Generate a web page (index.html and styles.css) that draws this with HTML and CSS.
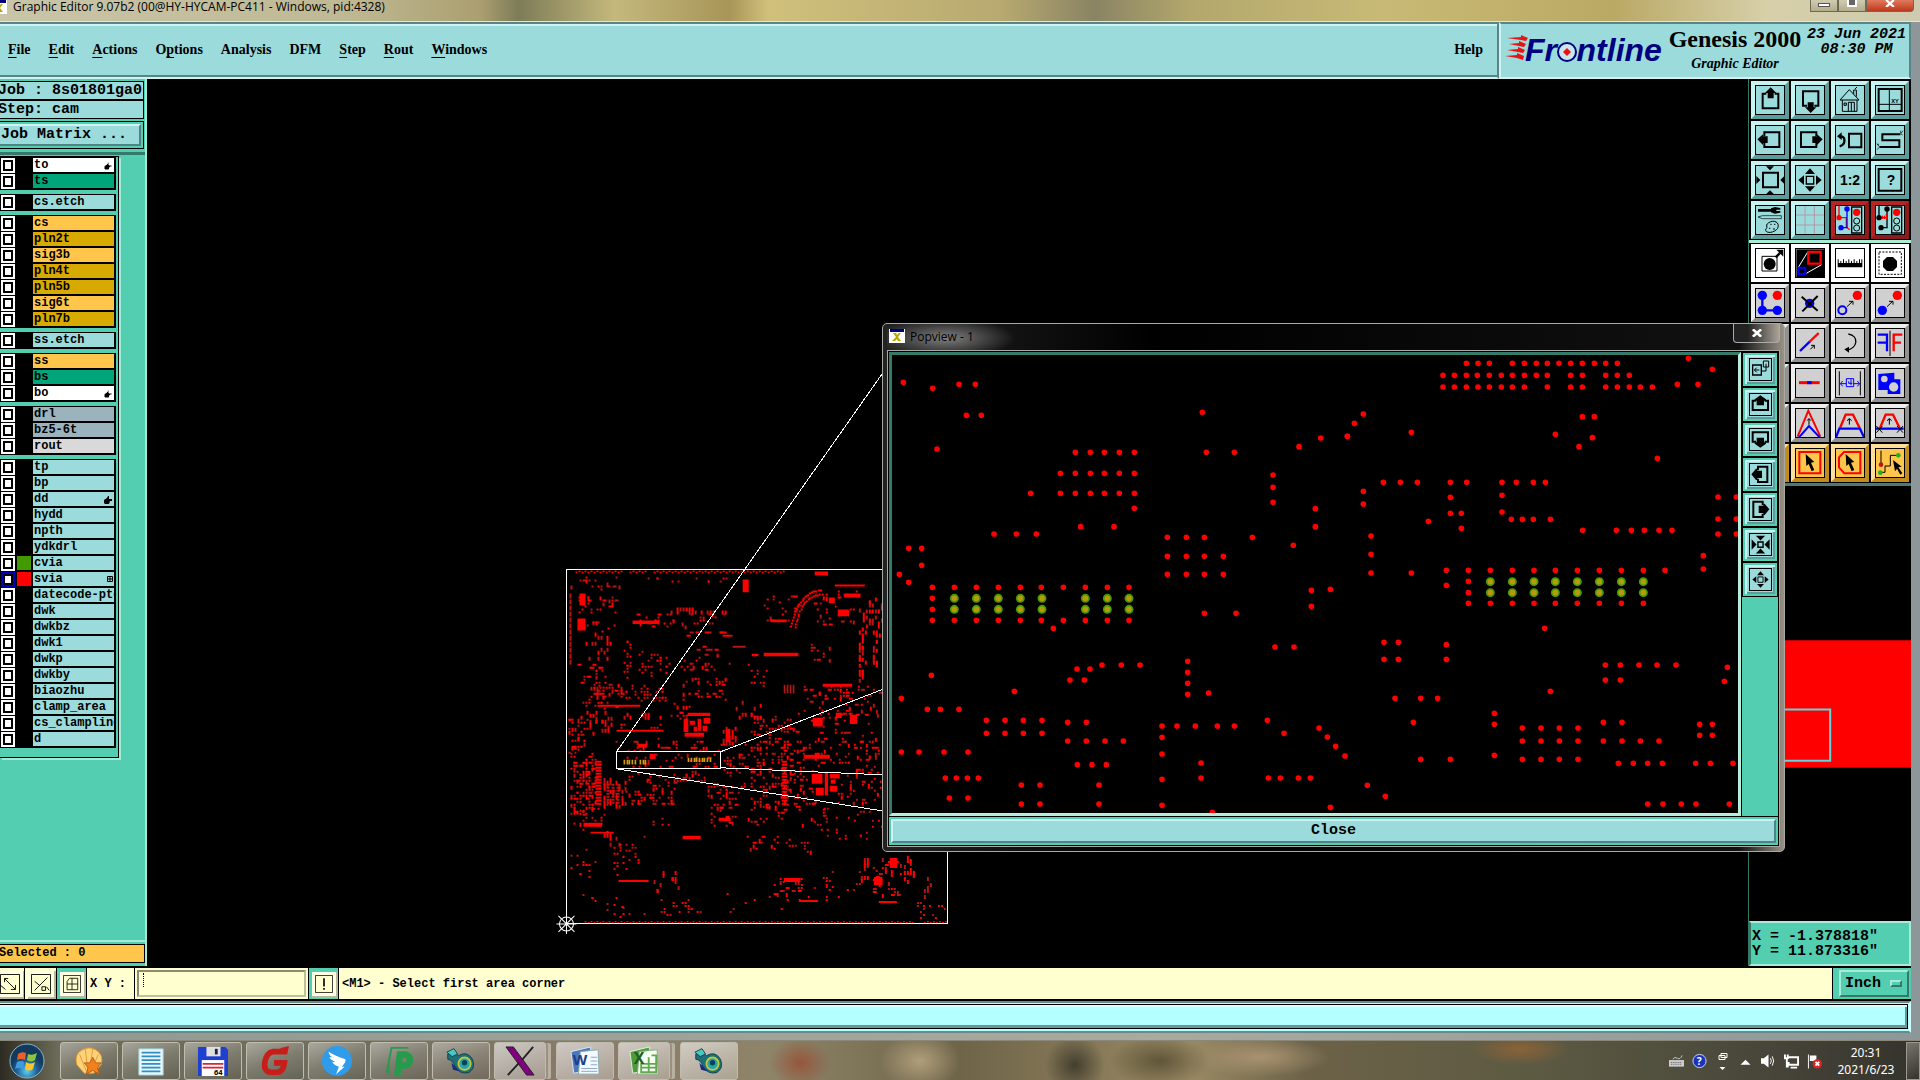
FILE: index.html
```html
<!DOCTYPE html>
<html lang="en">
<head>
    <meta charset="utf-8">
    <title>Graphic Editor 9.07b2</title>
    <link rel="stylesheet" href="styles.css">
</head>
<body>
    <svg class="defs" aria-hidden="true">
        <symbol id="i-up" viewBox="0 0 90 90"><path class="k5" d="M34 26H23V70H70V26H59"/><path d="M47 7L64 24H56V40H38V24H30Z"/></symbol>
        <symbol id="i-down" viewBox="0 0 90 90"><path class="k5" d="M36 62H24V19H70V62H58"/><path d="M47 84L30 67H38V52H56V67H64Z"/></symbol>
        <symbol id="i-left" viewBox="0 0 90 90"><path class="k5" d="M28 34V22H73V66H28V54"/><path d="M7 43L24 28V34H38V54H24V60Z"/></symbol>
        <symbol id="i-right" viewBox="0 0 90 90"><path class="k5" d="M64 34V22H18V66H64V54"/><path d="M83 43L66 28V34H52V54H66V60Z"/></symbol>
        <symbol id="i-pup" viewBox="0 0 63 63"><path class="k5" d="M18 20H8V48H54V20H44"/><path d="M31 4L48 16V20H42V34H20V20H14V16Z"/></symbol>
        <symbol id="i-pdown" viewBox="0 0 63 63"><path class="k5" d="M18 38H8V10H54V38H44"/><path d="M31 56L14 44V40H20V26H42V40H48V44Z"/></symbol>
        <symbol id="i-pleft" viewBox="0 0 63 63"><path class="k5" d="M24 18V8H52V54H24V44"/><path d="M4 31L18 14H22V20H36V42H22V48H18Z"/></symbol>
        <symbol id="i-pright" viewBox="0 0 63 63"><path class="k5" d="M38 18V8H10V54H38V44"/><path d="M58 31L44 14H40V20H26V42H40V48H44Z"/></symbol>
        <symbol id="i-home" viewBox="0 0 90 90"><path class="k3" d="M15 45L43 14L72 45H15M22 45V79H66V45M40 79V52H58V79M49 52V79M27 54H34V61H27ZM56 27V15H64V35M60 12L66 6"/></symbol>
        <symbol id="i-undo" viewBox="0 0 90 90"><path class="k5" d="M42 26H79V67H42Z"/><path class="k6" d="M14 35C32 30 34 58 14 64"/><path d="M6 34L20 22V45Z"/></symbol>
        <symbol id="i-snake" viewBox="0 0 90 90"><path class="k5" d="M76 28H22V46H73V66H14"/><path class="k2" d="M76 28L84 17M77 24V17M83 30L78 27M14 66L6 56M14 66L6 74M12 58H6"/></symbol>
        <symbol id="i-zoomin" viewBox="0 0 90 90"><path class="k5" d="M24 23H69V67H24Z"/><path d="M45 16L33 4H57ZM45 76L33 88H57ZM16 45L4 33V57ZM76 45L88 33V57Z"/></symbol>
        <symbol id="i-zoomout" viewBox="0 0 90 90"><path class="k4" d="M34 34H56V57H34Z"/><path d="M45 10L60 27H30ZM45 80L60 64H30ZM10 45L27 31V60ZM80 45L63 31V60Z"/></symbol>
        <symbol id="i-center" viewBox="0 0 90 90"><path class="k5" d="M34 34H56V57H34Z"/><path d="M45 28L25 7H65ZM45 62L25 84H65ZM28 45L7 22V68ZM62 45L84 22V68Z"/></symbol>
        <symbol id="i-tools" viewBox="0 0 90 90"><path d="M9 12H48V20H9ZM48 10L60 6L76 9V14H64V18H76V23L60 26L48 22Z"/><path class="k2" d="M9 36L22 32H79V41H22Z"/><path class="k3" d="M40 54C56 42 76 52 68 70C58 84 34 86 32 76C30 70 38 70 36 66S34 58 40 54ZM46 58h4M57 58h4M42 70h4M54 72h6"/></symbol>
        <symbol id="i-grid" viewBox="0 0 90 90"><path class="k3 pink" d="M0 30H90M0 60H90M30 0V90M58 0V90"/></symbol>
        <symbol id="i-net" viewBox="0 0 90 90"><path class="k4 red" d="M12 0V38H34V66L44 74"/><path class="k4 blue" d="M36 12V68H18"/><circle cx="12" cy="38" r="8" class="fr"/><circle cx="36" cy="12" r="8" class="fb"/><circle cx="18" cy="68" r="8" class="fb"/><use href="#light"/></symbol>
        <symbol id="i-net2" viewBox="0 0 90 90"><path class="k4" d="M12 0V38M36 12V68H18"/><path class="k4 red" d="M12 38H34M22 32V42M28 32V42M34 28V42"/><circle cx="12" cy="38" r="8"/><circle cx="36" cy="12" r="8"/><circle cx="18" cy="68" r="8"/><use href="#light"/></symbol>
        <g id="light"><path class="k4" d="M50 6H80V84H50Z"/><circle cx="65" cy="22" r="11" class="fr"/><circle cx="65" cy="48" r="9" class="k3"/><circle cx="65" cy="69" r="9" class="k3"/></g>
        <symbol id="i-feature" viewBox="0 0 90 90"><path class="k3" d="M21 25H66V69H21Z"/><circle cx="44" cy="48" r="18"/><path class="k6" d="M62 28L76 14"/><path d="M85 5V26L64 5Z"/></symbol>
        <symbol id="i-popview" viewBox="0 0 90 90"><path d="M4 4H88V88H4Z"/><path class="k3 white" d="M10 58L38 12M34 76L80 50"/><path class="k6 red" d="M40 12H77V47H40Z"/><path class="k5 blue" d="M9 59H31V78H9Z"/></symbol>
        <symbol id="i-ruler" viewBox="0 0 90 90"><path d="M8 34h3v11h5V39h3v6h5V34h3v11h5V39h3v6h5V34h3v11h5V39h3v6h5V34h3v11h5V39h3v6h5V34h3v11h4V34h3V58H8Z"/></symbol>
        <symbol id="i-select" viewBox="0 0 90 90"><path class="k3" stroke-dasharray="6 4" d="M12 12H79V79H12Z"/><path d="M36 27H54L66 39V57L54 69H36L24 57V39Z"/></symbol>
        <symbol id="i-chain" viewBox="0 0 90 90"><path class="k6 blue" d="M22 22V67H67"/><circle cx="22" cy="22" r="14" class="fb"/><circle cx="22" cy="67" r="14" class="fb"/><circle cx="67" cy="67" r="14" class="fb"/><circle cx="67" cy="22" r="14" class="fr"/></symbol>
        <symbol id="i-delete" viewBox="0 0 90 90"><circle cx="44" cy="46" r="14" class="fb"/><path class="k5" d="M20 26L68 68M68 24L22 70"/></symbol>
        <symbol id="i-copy" viewBox="0 0 90 90"><circle cx="67" cy="22" r="14" class="fr"/><circle cx="22" cy="67" r="12" class="k5 blue"/><path class="k3" d="M36 56L53 40M42 40H54V50"/></symbol>
        <symbol id="i-move" viewBox="0 0 90 90"><circle cx="67" cy="22" r="14" class="fr"/><circle cx="22" cy="67" r="14" class="fb"/><path class="k3" d="M36 56L53 40M42 40H54V50"/></symbol>
        <symbol id="i-line" viewBox="0 0 90 90"><path class="k6 blue" d="M15 69L45 40"/><path class="k6 red" d="M43 42L71 15"/><path class="k3" d="M46 64L58 52M48 52H58V62"/></symbol>
        <symbol id="i-rotate" viewBox="0 0 90 90"><path class="k4" d="M40 18C74 24 68 62 34 66"/><path d="M28 64L42 56V74Z"/></symbol>
        <symbol id="i-mirror" viewBox="0 0 90 90"><path class="k6 blue" d="M8 20H36V70M8 44H36"/><path class="k6 red" d="M82 20H56V70M56 44H78"/><path class="k3" d="M45 8V84"/></symbol>
        <symbol id="i-seg" viewBox="0 0 90 90"><path class="k8 red" d="M12 44H74"/><path class="k8 blue" d="M36 44H50"/></symbol>
        <symbol id="i-space" viewBox="0 0 90 90"><path class="k3" d="M13 10V82M76 10V82"/><path class="k3 blue" d="M34 32H56V56H34ZM16 47H34M56 47H74M23 39L16 47L23 55M67 39L74 47L67 55M48 34V52M41 40V46H52"/></symbol>
        <symbol id="i-shape" viewBox="0 0 90 90"><path class="fb" d="M10 18L58 14V34H76V78H38V66H10Z"/><circle cx="28" cy="33" r="10" fill="#d0d0d0"/><circle cx="56" cy="57" r="14" fill="#d0d0d0"/></symbol>
        <symbol id="i-peak" viewBox="0 0 90 90"><path class="k5 red" d="M8 86L40 8L76 86"/><path class="k5 blue" d="M12 88L42 54L74 88"/><path class="k3" d="M42 50V32M36 38L42 32L48 38"/></symbol>
        <symbol id="i-trap" viewBox="0 0 90 90"><path class="k6 red" d="M15 60L32 20H54L74 60"/><path class="k6 blue" d="M3 88L13 62H75L87 88"/><path class="k3" d="M43 50V32M36 38L43 32L50 38"/></symbol>
        <symbol id="i-trapx" viewBox="0 0 90 90"><path class="k6 red" d="M15 60L32 20H54L74 60"/><path class="k6 blue" d="M2 62H86"/><path class="k3" d="M43 50V32M36 38L43 32L50 38M4 54L22 74M22 54L4 74M66 54L84 74M84 54L66 74"/></symbol>
        <symbol id="i-rsel" viewBox="0 0 90 90"><path class="k5 red" d="M13 12H76V76H13Z"/><path d="M32 18L58 42L48 44L58 66L50 70L41 48L34 54Z"/></symbol>
        <symbol id="i-psel" viewBox="0 0 90 90"><path class="k5 red" d="M27 12H76V76H28L12 58V28Z"/><path d="M32 18L58 42L48 44L58 66L50 70L41 48L34 54Z"/></symbol>
        <symbol id="i-nsel" viewBox="0 0 90 90"><path class="k3" d="M18 8V46M70 22H46V54H30V73H18"/><circle cx="18" cy="50" r="7" fill="#c21807"/><circle cx="70" cy="22" r="7" fill="#20b020"/><circle cx="16" cy="74" r="7" fill="#20b020"/><path d="M54 36L80 56L70 58L82 76L76 80L66 62L60 70Z"/></symbol>
        <symbol id="i-newpop" viewBox="0 0 63 63"><path class="k4" d="M8 18H34V48H8Z"/><path class="k3" d="M40 6H56V24H40ZM34 36H48V14M28 33H14M20 26L13 33L20 40"/></symbol>
        <symbol id="i-hand" viewBox="0 0 8 8"><path d="M0 4L3 2L4 0H5V3H8V5H6L5 8H1L0 7Z"/></symbol>
        <symbol id="i-xwin" viewBox="0 0 16 14"><path fill="#fff" d="M0 0H16V14H0Z"/><path fill="#000080" d="M1 0H15V3H1Z"/><path fill="#b8a800" d="M4 4H7L8 6L10 4H12L9 8L12 12H9L8 10L6 12H3L7 8Z"/></symbol>
        <g id="fish"><path fill="#1f6f78" stroke="#0b3f50" d="M2 6Q10 2 14 8Q24 2 30 12Q34 22 26 27Q16 30 10 20Q8 13 2 12Z"/><circle cx="21" cy="17" r="7" fill="#2aa6a2" stroke="#c8c83c" stroke-width="2"/><circle cx="21" cy="16" r="3" fill="#0b3f66"/><path fill="#49c9bf" stroke="#0b3f50" d="M1 4L9 0L13 6L7 9Z"/><path fill="#1a2a80" d="M6 16L10 20L16 26L8 24Z"/></g>
    </svg>

    <div class="window">
        <header class="titlebar">
            <svg class="winicon"><use href="#i-xwin"/></svg>
            <span class="title">Graphic Editor 9.07b2 (00@HY-HYCAM-PC411 - Windows, pid:4328)</span>
            <div class="winbtns">
                <button aria-label="Minimize"><i class="min"></i></button>
                <button aria-label="Maximize"><i class="max"></i></button>
                <button class="x" aria-label="Close window"><svg viewBox="0 0 12 9"><path d="M1 0L11 9M11 0L1 9"/></svg></button>
            </div>
        </header>

        <div class="top">
            <nav class="menubar">
                <button><u>F</u>ile</button>
                <button><u>E</u>dit</button>
                <button><u>A</u>ctions</button>
                <button>O<u>p</u>tions</button>
                <button>Analysis</button>
                <button>DFM</button>
                <button><u>S</u>tep</button>
                <button><u>R</u>out</button>
                <button><u>W</u>indows</button>
                <button class="help">Help</button>
            </nav>
            <div class="brand">
                <svg class="logo" viewBox="0 0 160 30">
                    <path fill="#e11" d="M2 3L16 2V0L23 3L21 6L16 5ZM4 9L14 8V6L21 9L19 12L14 11ZM2 15L13 14V12L20 15L18 18L13 17ZM0 21L12 20V18L19 21L18 25L12 23Z"/>
                    <text x="20" y="26" class="logotext">Fr<tspan fill="none">o</tspan>ntline</text>
                    <circle cx="62" cy="17" r="9" fill="#c8e8f0" stroke="#000080" stroke-width="2"/>
                    <path fill="#e11" d="M62 13L66 17L62 21L58 17Z"/>
                </svg>
                <div class="product"><b>Genesis 2000</b><i>Graphic Editor</i></div>
                <div class="date"><span>23 Jun 2021</span><span>08:30 PM</span></div>
            </div>
        </div>

        <div class="work">
            <aside class="side">
                <div class="jobbox">Job : 8s01801ga0</div>
                <div class="jobbox">Step: cam</div>
                <div class="matrix"><button>Job Matrix ...</button></div>
                <div class="sidebody">
                    <div class="layers">
                        <div class="group">
                            <label class="layer white"><input type="checkbox"><i></i><span>to</span><svg class="mark"><use href="#i-hand"/></svg></label>
                            <label class="layer green"><input type="checkbox"><i></i><span>ts</span></label>
                        </div>
                        <div class="group">
                            <label class="layer"><input type="checkbox"><i></i><span>cs.etch</span></label>
                        </div>
                        <div class="group">
                            <label class="layer orange"><input type="checkbox"><i></i><span>cs</span></label>
                            <label class="layer gold"><input type="checkbox"><i></i><span>pln2t</span></label>
                            <label class="layer orange"><input type="checkbox"><i></i><span>sig3b</span></label>
                            <label class="layer gold"><input type="checkbox"><i></i><span>pln4t</span></label>
                            <label class="layer gold"><input type="checkbox"><i></i><span>pln5b</span></label>
                            <label class="layer orange"><input type="checkbox"><i></i><span>sig6t</span></label>
                            <label class="layer gold"><input type="checkbox"><i></i><span>pln7b</span></label>
                        </div>
                        <div class="group">
                            <label class="layer"><input type="checkbox"><i></i><span>ss.etch</span></label>
                        </div>
                        <div class="group">
                            <label class="layer orange"><input type="checkbox"><i></i><span>ss</span></label>
                            <label class="layer green"><input type="checkbox"><i></i><span>bs</span></label>
                            <label class="layer white"><input type="checkbox"><i></i><span>bo</span><svg class="mark"><use href="#i-hand"/></svg></label>
                        </div>
                        <div class="group">
                            <label class="layer slate"><input type="checkbox"><i></i><span>drl</span></label>
                            <label class="layer slate"><input type="checkbox"><i></i><span>bz5-6t</span></label>
                            <label class="layer silver"><input type="checkbox"><i></i><span>rout</span></label>
                        </div>
                        <div class="group">
                            <label class="layer"><input type="checkbox"><i></i><span>tp</span></label>
                            <label class="layer"><input type="checkbox"><i></i><span>bp</span></label>
                            <label class="layer"><input type="checkbox"><i></i><span>dd</span><svg class="mark"><use href="#i-hand"/></svg></label>
                            <label class="layer"><input type="checkbox"><i></i><span>hydd</span></label>
                            <label class="layer"><input type="checkbox"><i></i><span>npth</span></label>
                            <label class="layer"><input type="checkbox"><i></i><span>ydkdrl</span></label>
                            <label class="layer"><input type="checkbox"><i class="cvia"></i><span>cvia</span></label>
                            <label class="layer work-layer"><input type="checkbox" checked><i class="svia"></i><span>svia</span><svg class="mark small" viewBox="0 0 6 6"><path class="k1" d="M.5 .5H5.5V5.5H.5ZM3 0V6M0 3H6"/></svg></label>
                            <label class="layer"><input type="checkbox"><i></i><span>datecode-pte</span></label>
                            <label class="layer"><input type="checkbox"><i></i><span>dwk</span></label>
                            <label class="layer"><input type="checkbox"><i></i><span>dwkbz</span></label>
                            <label class="layer"><input type="checkbox"><i></i><span>dwk1</span></label>
                            <label class="layer"><input type="checkbox"><i></i><span>dwkp</span></label>
                            <label class="layer"><input type="checkbox"><i></i><span>dwkby</span></label>
                            <label class="layer"><input type="checkbox"><i></i><span>biaozhu</span></label>
                            <label class="layer"><input type="checkbox"><i></i><span>clamp_area</span></label>
                            <label class="layer"><input type="checkbox"><i></i><span>cs_clampline</span></label>
                            <label class="layer"><input type="checkbox"><i></i><span>d</span></label>
                        </div>
                    </div>
                </div>
                <div class="selected">Selected : 0</div>
            </aside>

            <main class="canvas">
                <svg id="board" viewBox="147 79 1602 886" preserveAspectRatio="xMinYMin slice">
                    <g id="copper" transform="translate(550 550) scale(.33333)"></g>
                    <g class="outline" shape-rendering="crispEdges">
                        <path d="M566 569H947V923H566Z"/>
                        <path d="M616 751H720V768H616Z"/>
                        <path d="M616 751L881 374M720 751L881 689M720 767L881 774M616 768L881 810"/>
                    </g>
                    <g class="outline">
                        <circle cx="566" cy="923" r="7"/>
                        <path d="M556 923H576M566 913V933M558 915L574 931M574 915L558 931"/>
                    </g>
                </svg>
            </main>

            <aside class="tools">
                <div class="pad">
                    <button aria-label="Pan up"><svg><use href="#i-up"/></svg></button>
                    <button aria-label="Pan down"><svg><use href="#i-down"/></svg></button>
                    <button aria-label="Home"><svg><use href="#i-home"/></svg></button>
                    <button aria-label="Window XY"><svg viewBox="0 0 90 90"><path class="k5" d="M11 12H80V78H11Z"/><path class="k3" d="M43 12V78M11 58H80"/><text x="49" y="53" class="tiny">XY</text></svg></button>
                    <button aria-label="Pan left"><svg><use href="#i-left"/></svg></button>
                    <button aria-label="Pan right"><svg><use href="#i-right"/></svg></button>
                    <button aria-label="Previous view"><svg><use href="#i-undo"/></svg></button>
                    <button aria-label="Serpentine"><svg><use href="#i-snake"/></svg></button>
                    <button aria-label="Zoom in"><svg><use href="#i-zoomin"/></svg></button>
                    <button aria-label="Zoom out"><svg><use href="#i-zoomout"/></svg></button>
                    <button aria-label="Scale"><svg viewBox="0 0 90 90"><text x="45" y="60" class="big">1:2</text></svg></button>
                    <button aria-label="Query"><svg viewBox="0 0 90 90"><path class="k5" d="M11 12H79V77H11Z"/><text x="48" y="61" class="big">?</text></svg></button>
                    <button aria-label="Setup"><svg><use href="#i-tools"/></svg></button>
                    <button aria-label="Grid"><svg><use href="#i-grid"/></svg></button>
                    <button class="alert" aria-label="Net check"><svg><use href="#i-net"/></svg></button>
                    <button class="alert" aria-label="Short check"><svg><use href="#i-net2"/></svg></button>
                </div>
                <div class="pad edit">
                    <button class="lit" aria-label="Feature"><svg><use href="#i-feature"/></svg></button>
                    <button class="lit" aria-label="Popview"><svg><use href="#i-popview"/></svg></button>
                    <button class="lit" aria-label="Measure"><svg><use href="#i-ruler"/></svg></button>
                    <button class="lit" aria-label="Highlight"><svg><use href="#i-select"/></svg></button>
                    <button aria-label="Chain"><svg><use href="#i-chain"/></svg></button>
                    <button aria-label="Delete"><svg><use href="#i-delete"/></svg></button>
                    <button aria-label="Copy"><svg><use href="#i-copy"/></svg></button>
                    <button aria-label="Move"><svg><use href="#i-move"/></svg></button>
                    <button aria-label="Add"><svg></svg></button>
                    <button aria-label="Stretch line"><svg><use href="#i-line"/></svg></button>
                    <button aria-label="Rotate"><svg><use href="#i-rotate"/></svg></button>
                    <button aria-label="Mirror"><svg><use href="#i-mirror"/></svg></button>
                    <button aria-label="Resize"><svg></svg></button>
                    <button aria-label="Break line"><svg><use href="#i-seg"/></svg></button>
                    <button aria-label="Spacing"><svg><use href="#i-space"/></svg></button>
                    <button aria-label="Surface"><svg><use href="#i-shape"/></svg></button>
                    <button aria-label="Arc"><svg></svg></button>
                    <button aria-label="Peak"><svg><use href="#i-peak"/></svg></button>
                    <button aria-label="Slide"><svg><use href="#i-trap"/></svg></button>
                    <button aria-label="Slide fixed"><svg><use href="#i-trapx"/></svg></button>
                    <button class="sel" aria-label="Select"><svg></svg></button>
                    <button class="sel" aria-label="Select rectangle"><svg><use href="#i-rsel"/></svg></button>
                    <button class="sel" aria-label="Select polygon"><svg><use href="#i-psel"/></svg></button>
                    <button class="sel" aria-label="Select net"><svg><use href="#i-nsel"/></svg></button>
                </div>
                <svg class="overview" viewBox="0 0 162 434" preserveAspectRatio="xMinYMin slice">
                    <path class="fr" d="M0 154H162V281H0Z"/>
                    <path fill="none" stroke="#5cd8dc" stroke-width="2" d="M10 223H81V274H10Z"/>
                </svg>
                <div class="coords">X = -1.378818"<br>Y = 11.873316"</div>
            </aside>
        </div>

        <div class="command">
            <button class="snap" aria-label="Snap end"><svg viewBox="0 0 22 22"><path class="k1" d="M.5 .5H21.5V21.5H.5ZM5 5L17 17M5 9V5H9M17 12V17H12M0 12L6 17"/></svg></button>
            <button class="snap" aria-label="Snap midpoint"><svg viewBox="0 0 22 22"><path class="k1" d="M.5 .5H21.5V21.5H.5ZM4 18L18 4M4 8L10 13M12 14h4v4h-4zM17 14L20 18"/></svg></button>
            <button class="snap on" aria-label="Snap grid"><svg viewBox="0 0 22 22"><path class="k1" d="M.5 .5H21.5V21.5H.5ZM5 8L8 4H18V18H5ZM11 4V18M5 11H18"/></svg></button>
            <label class="xy" for="xy">X Y :</label>
            <div class="entry"><input type="text" id="xy"><i></i></div>
            <button class="snap on" aria-label="Execute"><svg viewBox="0 0 22 22"><path class="k1" d="M.5 .5H21.5V21.5H.5Z"/><path class="k2" d="M11 4V14M11 16V18"/></svg></button>
            <output class="message">&lt;M1&gt; - Select first area corner</output>
            <div class="units"><select aria-label="Units"><option>Inch</option></select><i></i></div>
        </div>
        <div class="prompt"><div></div></div>

        <section class="popview" aria-label="Popview">
            <header>
                <svg class="winicon"><use href="#i-xwin"/></svg>
                <span>Popview - 1</span>
                <button class="popclose" aria-label="Close popview"><svg viewBox="0 0 12 9"><path d="M1 0L11 9M11 0L1 9"/></svg></button>
            </header>
            <div class="popframe">
                <div class="popmain">
                    <svg id="detail" viewBox="0 0 2538 1374" preserveAspectRatio="xMinYMin slice"></svg>
                    <div class="popbar">
                        <button aria-label="New view"><svg><use href="#i-newpop"/></svg></button>
                        <button aria-label="Up"><svg><use href="#i-pup"/></svg></button>
                        <button aria-label="Down"><svg><use href="#i-pdown"/></svg></button>
                        <button aria-label="Left"><svg><use href="#i-pleft"/></svg></button>
                        <button aria-label="Right"><svg><use href="#i-pright"/></svg></button>
                        <button aria-label="Shrink"><svg><use href="#i-center"/></svg></button>
                        <button aria-label="Expand"><svg><use href="#i-zoomout"/></svg></button>
                    </div>
                </div>
                <div class="popfoot"><button>Close</button></div>
            </div>
        </section>
    </div>

    <footer class="taskbar">
        <button class="start" aria-label="Start"><svg viewBox="0 0 36 36"><defs><radialGradient id="orb" cy=".8"><stop offset="0" stop-color="#5fd0f0"/><stop offset=".6" stop-color="#1d5f96"/><stop offset="1" stop-color="#123a5c"/></radialGradient></defs><circle cx="18" cy="18" r="17" fill="url(#orb)" stroke="#8fb4c8"/><path fill="#e8602c" d="M9 11Q13 8 17 10L16 17Q12 15 8 17Z"/><path fill="#8cc63f" d="M19 11Q23 13 28 10L26 17Q22 20 18 17Z"/><path fill="#3f9be0" d="M8 19Q12 17 15 19L14 26Q10 24 6 26Z"/><path fill="#fbc52c" d="M17 19Q21 22 26 19L24 26Q20 29 16 26Z"/></svg></button>
        <button class="task" aria-label="Shell"><svg viewBox="0 0 32 32"><path fill="#ffd27a" stroke="#e09a30" d="M11 29L3 20Q0 8 9 4Q16 0 23 4Q32 9 29 20L21 29Z"/><path stroke="#e09a30" fill="none" d="M14 29L6 9M15 28L12 3M16 28L20 3M17 28L26 9"/><path fill="#f08020" stroke="#b85a10" d="M20 12L23 18L29 18L25 23L27 30L20 26L13 30L15 23L11 18L17 18Z"/></svg></button>
        <button class="task" aria-label="Notes"><svg viewBox="0 0 32 32"><path fill="#e8f6ff" stroke="#9cc" d="M3 3H29V31H3Z"/><path stroke="#2d8fc4" stroke-width="2" d="M6 7H26M6 11H26M6 15H26M6 19H26M6 23H26M6 27H26"/></svg></button>
        <button class="task" aria-label="Total Commander"><svg viewBox="0 0 32 32"><path fill="#1f3fd0" d="M0 1H29L32 4V32H0Z"/><path fill="#e0e0e0" d="M9 1H24V11H9Z"/><path fill="#223" d="M18 3H21V9H18Z"/><path fill="#fff" d="M4 15H28V32H4Z"/><path stroke="#d23" stroke-width="2" d="M5 19H27M5 23H27"/><text x="17" y="31" font-size="8" font-weight="bold">64</text></svg></button>
        <button class="task" aria-label="Genesis"><svg viewBox="0 0 32 32"><path fill="none" stroke="#c81e1a" stroke-width="6" d="M29 6H14Q7 7 5 18Q4 28 12 28H19Q25 27 26 18H15"/><path fill="#c81e1a" d="M22 2L31 0L29 8H20Z"/></svg></button>
        <button class="task" aria-label="DingTalk"><svg viewBox="0 0 32 32"><circle cx="16" cy="16" r="16" fill="#2e9cea"/><path fill="#fff" d="M7 6Q17 12 25 14Q26 17 21 22H24L15 30L18 22Q12 20 11 17L14 17Q8 14 8 12L11 12Q7 9 7 6Z"/></svg></button>
        <button class="task" aria-label="PCB"><svg viewBox="0 0 32 32"><path fill="none" stroke="#259c4c" stroke-width="7" d="M14 32L17 9H22Q30 11 27 18Q24 22 15 21"/><path fill="none" stroke="#259c4c" stroke-width="2" d="M3 28L8 2H26M5 30V20"/></svg></button>
        <button class="task" aria-label="Incam"><svg viewBox="0 0 34 28"><use href="#fish"/></svg></button>
        <button class="task active stack" aria-label="X server"><svg viewBox="0 0 32 32"><path fill="#800080" stroke="#222" d="M1 1H9L31 31H23Z"/><path stroke="#222" stroke-width="2" d="M30 1L18 15M15 18L3 31"/></svg></button>
        <button class="task active" aria-label="Word"><svg viewBox="0 0 32 32"><path fill="#4a78b8" stroke="#dde8f8" d="M1 6L22 1V26L4 29Z"/><path fill="#f4f8ff" stroke="#8aa" d="M11 6L30 4L31 30L9 30Z"/><path stroke="#88a4c8" d="M22 12H29M22 16H29M22 20H29M12 24H29M12 27H29"/><text x="3" y="20" font-size="16" font-weight="bold" fill="#1d3f86">W</text></svg></button>
        <button class="task active stack" aria-label="Excel"><svg viewBox="0 0 32 32"><path fill="#4e9a3c" stroke="#e0f4d8" d="M1 6L22 1V26L4 29Z"/><path fill="#f4fff0" stroke="#8a8" d="M11 6L30 4L31 30L9 30Z"/><path fill="none" stroke="#63a850" stroke-width="2" d="M13 19H29V28H13ZM13 23H29M21 12V28M24 10H29V19"/><text x="5" y="19" font-size="17" font-weight="bold" fill="#20601a">X</text></svg></button>
        <button class="task active" aria-label="Incam 2"><svg viewBox="0 0 34 28"><use href="#fish"/></svg></button>
        <div class="tray">
            <svg class="kb" viewBox="0 0 16 16"><path fill="#ccc" d="M0 7H16V14H0Z"/><path fill="none" stroke="#555" stroke-dasharray="1 1" d="M2 9.500H14M2 11.500H14"/><path fill="none" stroke="#ccc" d="M4 6Q6 3 9 5T14 2"/></svg>
            <svg viewBox="0 0 16 16"><circle cx="8" cy="8" r="7" fill="#1a33b8" stroke="#cdd6ff"/><text x="5" y="12" font-size="11" font-weight="bold" fill="#fff">?</text></svg>
            <svg viewBox="0 0 12 20"><path fill="none" stroke="#fff" d="M4.500 2.500H10.500V6.500H4.500ZM2.500 4.500H8.500V8.500H2.500Z"/><path fill="#fff" d="M3 16H9L6 19Z"/></svg>
            <svg viewBox="0 0 12 16"><path fill="#fff" d="M2 11L6 7L10 11Z"/></svg>
            <svg viewBox="0 0 16 16"><path fill="#fff" d="M0 5H3L8 1V15L3 11H0Z"/><path fill="none" stroke="#fff" d="M10 5Q12 8 10 11M12 3Q15 8 12 13"/></svg>
            <svg viewBox="0 0 16 16"><path fill="none" stroke="#fff" stroke-width="2" d="M5 4H15V12H5V9M7 15H14M1 1V5H4V1M3 5V14H5"/></svg>
            <svg viewBox="0 0 16 16"><path fill="#fff" d="M1 1H2V16H1ZM3 2H10V8H3Z"/><circle cx="11" cy="11" r="5" fill="#d22"/><path stroke="#fff" stroke-width="2" d="M9 9L13 13M13 9L9 13"/></svg>
            <div class="clock"><span>20:31</span><span>2021/6/23</span></div>
            <button class="desktop" aria-label="Show desktop"></button>
        </div>
    </footer>
    <script src="viewer.js"></script>
</body>
</html>
```
FILE: styles.css
```css
* {
    box-sizing: border-box;
}
body {
    margin: 0;
    height: 100vh;
    display: flex;
    flex-direction: column;
    overflow: hidden;
    background: #000;
    color: #000;
    font-family: "Liberation Mono", monospace;
    font-weight: bold;
    font-size: 12px;
}
button, input, select {
    font: inherit;
    color: inherit;
    margin: 0;
    padding: 0;
}
svg {
    display: block;
    flex: none;
}
.defs {
    position: absolute;
    width: 0;
    height: 0;
}

/* icon strokes */
.k1, .k2, .k3, .k4, .k5, .k6, .k8 { fill: none; stroke: #000; stroke-width: 1; }
.k2 { stroke-width: 2; }
.k3 { stroke-width: 3; }
.k4 { stroke-width: 4; }
.k5 { stroke-width: 6; }
.k6 { stroke-width: 7; }
.k8 { stroke-width: 9; }
.red { stroke: #f00; }
.blue { stroke: #00f; }
.white { stroke: #fff; }
.pink { stroke: #b09aa8; }
.fr { fill: #f00; }
.fb { fill: #00f; }
.tiny { font: bold 17px "Liberation Sans", sans-serif; }
.big { font: bold 42px "Liberation Sans", sans-serif; text-anchor: middle; }

/* window */
.window {
    flex: 1;
    min-height: 0;
    position: relative;
    display: flex;
    flex-direction: column;
    padding: 0 9px 7px 0;
    background: linear-gradient(90deg, #8f9891 0, #aaa9a0 60%, #8d9799 100%);
}
.titlebar {
    height: 22px;
    margin-right: -9px;
    display: flex;
    align-items: flex-start;
    background: linear-gradient(90deg, #c9c5a8 0, #bfb993 18%, #ab9f70 25%, #7d7c58 27%, #c4b87c 32%, #a89558 38%, #d0c07c 40%, #b8aa70 52%, #8a8464 57%, #b3a76c 62%, #c8ba76 72%, #baa965 84%, #d6cfa8 92%, #cfcab0 100%);
    border-bottom: 1px solid #e8e4d0;
}
.winicon {
    width: 16px;
    height: 14px;
}
.titlebar .winicon {
    margin-left: -9px;
}
.title {
    margin-left: 6px;
    font: 12px/14px "Open Sans", sans-serif;
}
.winbtns {
    margin-left: auto;
    margin-right: 6px;
    display: flex;
}
.winbtns button {
    width: 28px;
    height: 12px;
    border: 1px solid #6e6952;
    border-top: 0;
    background: linear-gradient(#cfcab2, #b3ac8c);
    display: flex;
    justify-content: center;
}
.winbtns .x {
    width: 48px;
    background: linear-gradient(#e07a5c, #c0381c);
    border-radius: 0 0 4px 0;
}
.winbtns svg {
    width: 12px;
    height: 7px;
}
.winbtns svg path, .popclose path {
    stroke: #fff;
    stroke-width: 3;
}
.min {
    width: 12px;
    height: 4px;
    margin-top: 3px;
    background: #fff;
    border: 1px solid #555;
}
.max {
    width: 10px;
    height: 7px;
    background: #666;
    border: 2px solid #fff;
    border-top: 0;
}
.top {
    height: 57px;
    display: flex;
}
.menubar, .brand {
    background: #9bdbdb;
    border: 2px solid;
    border-color: #5b8486 #5b8486 #d0f4f4 #d0f4f4;
}
.menubar {
    flex: 1;
    display: flex;
    align-items: center;
    gap: 18px;
    padding: 0 14px 2px 8px;
    border-left: 0;
    box-shadow: inset 0 2px #d0f4f4, inset 0 -2px #5b8486;
}
.menubar button {
    border: 0;
    background: none;
    font: bold 14px/20px "Liberation Serif", serif;
}
.menubar u {
    text-underline-offset: 3px;
}
.menubar .help {
    margin-left: auto;
}
.brand {
    width: 412px;
    display: flex;
    align-items: flex-start;
    padding: 3px 1px 0 4px;
}
.logo {
    width: 160px;
    height: 30px;
    margin-top: 8px;
}
.logotext {
    font: italic bold 32px "Liberation Sans", sans-serif;
    fill: #000080;
}
.product {
    width: 140px;
    display: flex;
    flex-direction: column;
    align-items: center;
    font-family: "Liberation Serif", serif;
}
.product b {
    font-size: 24px;
    line-height: 24px;
    white-space: nowrap;
}
.product i {
    font-size: 14px;
    line-height: 26px;
}
.date {
    flex: 1;
    display: flex;
    flex-direction: column;
    align-items: center;
    font: italic bold 15px/15px "Liberation Mono", monospace;
    white-space: nowrap;
}

/* work area */
.work {
    flex: 1;
    min-height: 0;
    display: flex;
    background: #000;
}
.side {
    width: 147px;
    display: flex;
    flex-direction: column;
    background: #54ceb0;
    border-right: 2px solid #a0ecd8;
    padding-top: 2px;
}
.jobbox {
    height: 19px;
    margin-right: 1px;
    background: #9bdbdb;
    border: 1px solid #000;
    border-left: 0;
    font-size: 15px;
    line-height: 18px;
    text-indent: -2px;
    white-space: pre;
}
.matrix {
    margin: 2px 1px 0 0;
    border: 1px solid #000;
    border-left: 0;
    padding: 2px 2px 2px 0;
}
.matrix button {
    width: 100%;
    height: 22px;
    border: 2px solid;
    border-color: #d0f4f4 #4f8486 #4f8486 #d0f4f4;
    border-left: 0;
    background: #9bdbdb;
    font-size: 15px;
    line-height: 18px;
    text-align: left;
    padding-left: 1px;
}
.sidebody {
    flex: 1;
    margin-top: 3px;
    border-top: 3px solid #357a68;
    border-bottom: 2px solid #a0ecd8;
}
.layers {
    width: 119px;
    border: 1px solid #000;
    border-left: 0;
    box-shadow: 2px 2px #a0ecd8;
    margin-top: 1px;
    padding-bottom: 9px;
}
.group {
    width: 116px;
    background: #000;
    padding: 1px 0 0 1px;
    margin-bottom: 4px;
}
.group:last-child {
    margin-bottom: 0;
}
.layer {
    display: flex;
    height: 16px;
    gap: 2px;
    border-bottom: 2px solid #000;
    position: relative;
}
.layer input {
    appearance: none;
    width: 14px;
    height: 15px;
    background: #fff;
    border: 2px solid #fff;
    box-shadow: inset 0 0 0 2px #000;
    flex: none;
}
.layer i {
    width: 14px;
    flex: none;
}
.layer .cvia { background: #439a00; }
.layer .svia { background: #f00; }
.layer span {
    width: 81px;
    padding-left: 1px;
    background: #9bdbdb;
    line-height: 15px;
    overflow: hidden;
    white-space: nowrap;
}
.layer.white span { background: #fff; }
.layer.green span { background: #00a57a; }
.layer.orange span { background: #ffc64b; }
.layer.gold span { background: #d8aa00; }
.layer.slate span { background: #9bb3bd; }
.layer.silver span { background: #d9d9d9; }
.work-layer input {
    border-color: #0000b8;
}
.mark {
    position: absolute;
    right: 4px;
    top: 4px;
    width: 8px;
    height: 8px;
}
.mark.small {
    right: 3px;
    width: 6px;
    height: 6px;
}
.selected {
    height: 19px;
    margin: 2px 0 3px;
    background: #ffc64b;
    border: 1px solid #000;
    border-left: 0;
    line-height: 17px;
    text-indent: -1px;
}
.canvas {
    flex: 1;
    min-width: 0;
    background: #000;
}
#board {
    width: 100%;
    height: 100%;
}
.outline {
    fill: none;
    stroke: #fff;
}

/* right hand tools */
.tools {
    width: 163px;
    display: flex;
    flex-direction: column;
    border-left: 1px solid #357a68;
}
.pad {
    display: grid;
    grid-template-columns: repeat(4, 38px);
    gap: 2px;
    padding: 2px 2px 1px 2px;
    border-bottom: 3px solid #a8ecd8;
}
.pad button {
    width: 38px;
    height: 38px;
    border: 4px solid;
    border-color: #c6f4f2 #5c9c9a #5c9c9a #c6f4f2;
    background: #9bdbdb;
}
.pad svg {
    width: 30px;
    height: 30px;
    outline: 1px solid #000;
    outline-offset: -1px;
}
.pad .alert {
    border-color: #b82424 #8c1c1c #8c1c1c #b82424;
}
.pad.edit {
    border-bottom-color: #4c7a70;
    padding-top: 1px;
    background: #000;
}
.edit button {
    background: #d0d0d0;
    border-color: #eee #909090 #909090 #eee;
}
.edit .lit {
    background: #fff;
    border-color: #fff;
}
.edit .sel {
    background: #ffc64b;
    border-color: #ffe09a #c08c20 #c08c20 #ffe09a;
}
.overview {
    flex: 1;
    min-height: 0;
    width: 100%;
}
.coords {
    height: 45px;
    padding: 6px 0 0 1px;
    background: #54ceb0;
    border: 2px solid;
    border-color: #a8ecd8 #a8ecd8 #a8ecd8 #357a68;
    font-size: 15px;
    line-height: 15px;
    white-space: nowrap;
}

/* command line */
.command {
    display: flex;
    height: 35px;
    padding: 2px 0;
    gap: 1px;
    background: #000;
}
.snap {
    width: 31px;
    border: 0;
    background: #ffffd0;
    display: flex;
    align-items: center;
    justify-content: center;
    overflow: hidden;
}
.snap:first-child {
    width: 24px;
    justify-content: flex-start;
}
.snap svg {
    width: 20px;
    height: 20px;
    box-shadow: 0 0 0 3px #ffffe4, 1px 1px 0 4px #b8b89a;
}
.snap.on {
    width: 29px;
    background: #54ceb0;
}
.snap.on svg {
    background: #ffffd0;
    width: 18px;
    height: 18px;
}
.xy {
    width: 47px;
    padding-left: 3px;
    background: #ffffd0;
    line-height: 32px;
}
.entry {
    width: 173px;
    padding: 2px;
    background: #ffffd0;
    position: relative;
}
.entry input {
    width: 100%;
    height: 27px;
    background: #ffffd0;
    border: 2px solid;
    border-color: #8c8c70 #c0c0a0 #c0c0a0 #8c8c70;
    padding-left: 4px;
}
.entry i {
    position: absolute;
    left: 8px;
    top: 5px;
    height: 14px;
    border-left: 1px dotted #000;
}
.message {
    flex: 1;
    padding-left: 3px;
    background: #ffffd0;
    line-height: 32px;
}
.units {
    width: 78px;
    background: #54ceb0;
    padding: 2px 2px 2px 6px;
    position: relative;
}
.units select {
    appearance: none;
    width: 100%;
    height: 27px;
    padding-left: 4px;
    background: #54ceb0;
    border: 2px solid;
    border-color: #a8ecd8 #357a68 #357a68 #a8ecd8;
    font-size: 15px;
}
.units i {
    position: absolute;
    right: 9px;
    top: 12px;
    width: 12px;
    height: 7px;
    border: 2px solid;
    border-color: #a8ecd8 #357a68 #357a68 #a8ecd8;
}
.prompt {
    height: 32px;
    border: 2px solid;
    border-color: #6a8a88 #d8ffff #6a8a88 #d8ffff;
    border-left: 0;
    background: #b4ffff;
    padding: 1px 1px 2px 0;
}
.prompt div {
    height: 100%;
    border: 1px solid #000;
    border-left: 0;
    box-shadow: inset 0 2px #d8ffff, inset -2px -3px #669898;
}

/* popview */
.popview {
    position: absolute;
    left: 882px;
    top: 323px;
    width: 903px;
    height: 529px;
    display: flex;
    flex-direction: column;
    padding: 0 4px 4px;
    border: 1px solid #a8a8a4;
    border-radius: 5px;
    background: linear-gradient(90deg, #222 0, #000 30%, #111 95%, #999184 100%);
}
.popview header {
    height: 26px;
    display: flex;
    align-items: flex-start;
    padding: 5px 0 0 2px;
    background: radial-gradient(ellipse 70px 20px at 58px 14px, #808080 0, rgba(90, 90, 90, .6) 60%, transparent);
}
.popview header span {
    margin-left: 5px;
    font: 12px/16px "Open Sans", sans-serif;
}
.popclose {
    width: 47px;
    height: 19px;
    margin: -5px 0 0 auto;
    border: 1px solid #aaa;
    border-top: 0;
    border-radius: 0 0 4px 4px;
    background: linear-gradient(90deg, #222 30%, #aaa297);
    display: flex;
    align-items: center;
    justify-content: center;
}
.popclose svg {
    width: 10px;
    height: 8px;
}
.popframe {
    flex: 1;
    min-height: 0;
    display: flex;
    flex-direction: column;
    border: 1px solid #a8a8a4;
    padding: 1px;
    background: #000;
}
.popmain {
    flex: 1;
    min-height: 0;
    display: flex;
    gap: 1px;
}
#detail {
    flex: 1;
    min-width: 0;
    height: 100%;
    background: #000;
    border: 3px solid;
    border-color: #357a68 #b8ecdc #b8ecdc #357a68;
}
.popbar {
    width: 36px;
    background: #54ceb0;
    display: flex;
    flex-direction: column;
}
.popbar button {
    height: 35px;
    border: 1px solid #000;
    background: #9bdbdb;
    box-shadow: inset 0 0 0 2px #54ceb0, inset 4px 4px #c6f4f2, inset -4px -4px #5c9c9a;
    display: flex;
    align-items: center;
    justify-content: center;
}
.popbar svg {
    width: 21px;
    height: 21px;
    outline: 1px solid #000;
}
.popfoot {
    margin-top: 1px;
    padding: 2px;
    background: #54ceb0;
}
.popfoot button {
    width: 100%;
    height: 24px;
    background: #9bdbdb;
    border: 2px solid;
    border-color: #d0f4f4 #4f8486 #4f8486 #d0f4f4;
    font-size: 15px;
    line-height: 20px;
}

/* taskbar */
.taskbar {
    height: 40px;
    display: flex;
    align-items: center;
    gap: 4px;
    border-top: 1px solid #8a8878;
    background:
        radial-gradient(ellipse 30px 24px at 800px 22px, rgba(160, 60, 36, .6), transparent),
        radial-gradient(ellipse 40px 30px at 920px 20px, rgba(200, 180, 140, .7), transparent),
        radial-gradient(ellipse 30px 30px at 1075px 24px, rgba(40, 38, 30, .7), transparent),
        radial-gradient(ellipse 50px 26px at 1160px 20px, rgba(60, 54, 30, .6), transparent),
        radial-gradient(ellipse 70px 20px at 1260px 16px, #a89270, transparent),
        radial-gradient(ellipse 50px 16px at 1520px 8px, #8a6238, transparent),
        linear-gradient(90deg, #2e2c22 0, #6c6a58 3%, #716f60 20%, #8b7a6c 30%, #8e8468 40%, #6e6448 50%, #9a8a64 62%, #6c6248 68%, #5c5a42 80%, #48463a 92%, #34332c 100%);
    font: 12px/17px "Noto Sans", sans-serif;
    color: #fff;
}
.start {
    width: 56px;
    border: 0;
    background: none;
    padding-left: 9px;
}
.start svg {
    width: 36px;
    height: 36px;
}
.task {
    width: 58px;
    height: 38px;
    border: 1px solid #c0bdae;
    border-radius: 3px;
    background: linear-gradient(160deg, rgba(255, 255, 255, .4), rgba(255, 255, 255, .1) 50%, rgba(0, 0, 0, .1));
    display: flex;
    align-items: center;
    justify-content: center;
}
.task svg {
    width: 30px;
    height: 32px;
}
.task.active {
    background: linear-gradient(160deg, rgba(255, 255, 255, .6), rgba(255, 255, 255, .25));
}
.task.stack {
    width: 52px;
    margin-right: 6px;
    box-shadow: 3px 0 0 -1px #999080, 6px 0 0 -1px #b8b0a0;
}
.tray {
    margin-left: auto;
    display: flex;
    align-items: center;
    gap: 8px;
}
.tray svg {
    width: 15px;
    height: 20px;
}
.clock {
    width: 64px;
    margin-left: 4px;
    display: flex;
    flex-direction: column;
    align-items: center;
}
.desktop {
    width: 14px;
    height: 38px;
    border: 1px solid #9a9890;
    background: linear-gradient(150deg, #77756c, #33322c);
}
```
FILE: viewer.js
```js
const NS = 'http://www.w3.org/2000/svg';

function addPath(parent, attrs) {
    const p = document.createElementNS(NS, 'path');
    for (const k in attrs) p.setAttribute(k, attrs[k]);
    parent.appendChild(p);
}

// fixed seed so the board always looks the same
let seed = 4328;
function rnd() {
    seed = (seed * 1103515245 + 12345) % 2147483648;
    return seed / 2147483648;
}

// via clusters: x, y, width, height, count, shape (d dot, h bar, v bar, m mixed)
const clusters = [
    [60, 78, 150, 40, 22, 'm'], [210, 80, 320, 18, 14, 'd'], [75, 130, 120, 55, 35, 'm'],
    [80, 205, 125, 35, 16, 'm'], [360, 170, 170, 12, 26, 'v'], [250, 190, 280, 36, 50, 'm'],
    [105, 245, 75, 80, 24, 'v'], [220, 260, 20, 120, 24, 'd'], [255, 300, 110, 75, 46, 'd'],
    [400, 243, 140, 10, 16, 'h'], [420, 285, 160, 10, 14, 'h'], [390, 300, 145, 60, 24, 'm'],
    [590, 330, 60, 75, 16, 'd'], [640, 125, 110, 85, 28, 'm'], [790, 120, 140, 100, 45, 'm'],
    [935, 140, 55, 80, 40, 'v'], [925, 230, 15, 160, 45, 'v'], [965, 230, 14, 110, 26, 'v'],
    [770, 270, 70, 60, 14, 'm'], [80, 340, 90, 60, 34, 'm'], [395, 380, 130, 60, 44, 'm'],
    [120, 400, 95, 38, 55, 'm'], [225, 402, 125, 45, 52, 'd'], [95, 445, 70, 25, 14, 'd'],
    [200, 485, 140, 10, 14, 'v'], [200, 518, 140, 10, 10, 'd'], [100, 480, 85, 60, 34, 'v'],
    [55, 495, 55, 110, 60, 'm'], [60, 605, 70, 180, 170, 'm'], [360, 455, 60, 45, 24, 'm'],
    [545, 450, 80, 50, 16, 'v'], [600, 495, 140, 60, 66, 'm'], [740, 405, 245, 85, 80, 'm'],
    [780, 480, 200, 80, 34, 'm'], [515, 520, 40, 60, 26, 'v'], [160, 560, 440, 40, 50, 'm'],
    [210, 610, 290, 40, 46, 'm'], [160, 680, 60, 85, 52, 'v'], [225, 665, 150, 95, 80, 'm'],
    [370, 660, 100, 30, 26, 'm'], [520, 600, 80, 70, 34, 'm'], [600, 560, 120, 210, 170, 'm'],
    [730, 560, 255, 80, 90, 'm'], [730, 640, 60, 120, 44, 'm'], [860, 645, 130, 110, 54, 'm'],
    [470, 695, 110, 40, 32, 'm'], [480, 740, 75, 80, 44, 'm'], [590, 755, 240, 70, 46, 'm'],
    [800, 770, 190, 90, 36, 'd'], [60, 770, 100, 60, 28, 'm'], [160, 840, 45, 40, 10, 'v'],
    [190, 880, 75, 90, 34, 'd'], [60, 885, 70, 90, 20, 'd'], [95, 1010, 130, 60, 12, 'd'],
    [310, 960, 80, 60, 16, 'v'], [320, 1045, 100, 45, 28, 'd'], [560, 855, 220, 50, 34, 'm'],
    [670, 980, 80, 50, 26, 'm'], [815, 960, 110, 60, 20, 'd'], [930, 920, 20, 60, 18, 'v'],
    [965, 920, 80, 120, 44, 'm'], [1050, 915, 40, 90, 24, 'v'], [1120, 960, 20, 75, 8, 'v'],
    [1090, 1045, 95, 60, 20, 'd'], [260, 800, 130, 60, 8, 'd'], [430, 1000, 440, 90, 22, 'd'],
    [180, 1060, 120, 35, 10, 'd']
];

// solid pads: x, y, w, h
const pads = [
    [87, 130, 18, 36], [80, 204, 24, 36], [246, 210, 80, 10], [575, 88, 18, 38],
    [792, 62, 40, 12], [852, 102, 90, 6], [860, 178, 34, 20], [880, 130, 50, 12],
    [640, 306, 104, 11], [604, 308, 20, 8], [834, 142, 18, 16], [815, 398, 88, 9],
    [786, 500, 30, 26], [896, 492, 22, 28], [526, 534, 14, 40], [262, 580, 28, 12],
    [298, 610, 18, 16], [396, 856, 54, 10], [100, 816, 55, 12], [204, 986, 90, 6],
    [120, 843, 70, 5], [745, 1047, 58, 6], [984, 1049, 54, 6], [760, 612, 78, 12],
    [968, 978, 26, 24], [1016, 922, 22, 30], [504, 800, 36, 10], [660, 206, 48, 8],
    [140, 462, 128, 6], [198, 537, 140, 6], [195, 461, 10, 10], [698, 982, 50, 12],
    [412, 486, 68, 10], [400, 504, 14, 40], [402, 545, 58, 12], [416, 510, 16, 12],
    [440, 504, 10, 36], [458, 500, 20, 18], [456, 526, 14, 16], [428, 528, 10, 14],
    [784, 668, 32, 30], [822, 664, 10, 70], [836, 670, 30, 14], [794, 712, 24, 22],
    [838, 706, 22, 18], [855, 486, 18, 16], [840, 688, 14, 12]
];

function box(x, y, w, h) {
    return `M${Math.round(x / 3) * 3} ${Math.round(y / 3) * 3}h${w}v${h}h${-w}z`;
}

function drawBoard() {
    const copper = document.getElementById('copper');
    let bright = '', dark = '';
    for (const [x, y, w, h, n, kind] of clusters) {
        for (let i = 0; i < n * 0.75; i++) {
            // keep things on a coarse grid, like real footprints
            const px = x + Math.round(rnd() * w / 9) * 9;
            const py = y + Math.round(rnd() * h / 9) * 9;
            const k = kind === 'm' ? 'ddddhv'[Math.floor(rnd() * 6)] : kind;
            const s = k === 'h' ? box(px, py, 12, 6) : k === 'v' ? box(px, py, 6, 12) : box(px, py, 6, 6);
            if (rnd() < 0.4) dark += s; else bright += s;
        }
    }
    for (const p of pads) bright += box(...p);
    // edge stitching
    for (let x = 75; x < 700; x += 9) if (x < 215 || x > 305 || (x > 235 && x < 285)) bright += box(x, 61 + (x % 2) * 3, 6, 5);
    for (let x = 102; x < 1188; x += 9) if (x < 1090 || x > 1110) bright += box(x, 1110 + (x % 2) * 3, 6, 5);
    for (let y = 130; y < 345; y += 18) dark += box(57, y, 6, 15);
    // ladders
    for (let y = 630; y < 765; y += 9) bright += box(136, y, 18, 6);
    for (let y = 630; y < 765; y += 9) bright += box(694, y, 16, 6);
    for (let x = 699; x < 732; x += 9) dark += box(x, 402, 5, 26);
    for (let x = 169; x < 210; x += 15) for (let y = 700; y < 760; y += 9) dark += box(x, y, 9, 6);
    // curved bus
    for (let i = 0; i < 20; i++) {
        const t = i / 19;
        const cx = 718 + 35 * t + 55 * t * t, cy = 224 - 106 * Math.sin(t * 1.57);
        bright += box(cx, cy, 7, 6) + box(cx + 14 - 10 * t, cy + 4 + 8 * t, 6, 6);
    }
    addPath(copper, { d: dark, fill: '#b41414' });
    addPath(copper, { d: bright, fill: '#f00' });

    let gold = '';
    for (let x = 219; x < 290; x += 8) if (x !== 259) gold += box(x, 627, 5, 14);
    for (let x = 412; x < 480; x += 8) gold += box(x, 622, 5, 13);
    addPath(copper, { d: gold, fill: '#d0a010' });
}

// popview contents, four tiles of "y: x x x" rows
const tiles = [
    { dx: -36, dy: -105, red: `187:70 205:158 193:237,286 286:259,304 387:171 397:586,631,673,718,763,979,1063
        460:541,586,631,673,718,763 520:452,541,586,631,673,718,763 565:763 620:602,702,1306 642:342,409,469
        685:86,125 736:125 763:58,862,919,973,1030 787:86 277:967 465:1179 502:1179 547:1179 380:1257 354:1322
        349:1402 566:1306 652:862,919,973,1117 676:1240 709:862,919,973,1030
        802:157,223,289,355,421,484,550,616,682,747`, green: '' },
    { dx: 1344, dy: -105, red: `130:379,414,448,517,553,589,622,657,692,727,763,797,832
        166:309,343,379,412,448,484,517,553,589,622,692,727,797,832,868
        201:309,343,379,414,448,484,517,553,622,692,727,797,832,868,901,937 115:1045 148:1117 193:1012,1074
        282:70 310:43 349:22 337:214 290:727,763 343:646 353:757 380:717 415:952
        487:130,181,232,331,380,486,529,580,616 514:70 552:70 532:331 580:331,364 604:265 625:364 526:486
        576:486 598:514,547,580,631 631:728,829,874,913,957,996 531:1134,1189 597:1134,1189 642:1134,1189
        648:93 703:93 759:93,214 707:1090 747:1090 751:319,385,451,517,582,646,712,778,844,910,975
        796:319 784:385`, green: '785:451,517,582,646,712,778,844,910' },
    { dx: -36, dy: 675, red: `55:157 88:157 121:157,223,289,355,421,484,550,616,682,747 145:520 31:1294 28:1351
        79:1294 100:973,1068 201:1185,1242 255:666,724,780 267:591,630 300:570,613 244:923 277:923 310:923
        343:923 339:986 286:154 355:64 334:403 388:142,181,237 421:319,375,430,486,1162
        460:319,375,430,486,1212 427:563,619 483:563,619,675,730 438:846,891,946,1012,1063 472:846 522:846
        598:846 676:846 444:1317 471:1342 499:1367 528:1395 516:64,117,192,264 554:592,636,679
        594:196,229,262,295,963,1165,1201,1255,1291 654:208,264 615:424,480,657 672:424,480,657 549:963
        682:1351 697:997`, green: '55:223,289,355,421,486,616,682,747 88:223,289,355,421,486,616,682,747' },
    { dx: 1344, dy: 675, red: `38:385 70:385,451,517,582,646,712,778,844,910 145:614 187:132,175 238:132,175,319
        194:319 255:796,841,897,951,1008 300:796,841 262:1162 304:1153 334:631 355:165,242,293 427:220,790,846
        400:463 433:463,1079,1117 526:463 444:547,603,658,714 483:547,603,658,714,790,846,901,957
        538:547,603,658,714,242,331 466:1079,1117 550:835,880,923,967,1067,1111,1179 616:82 649:136
        672:923,969,1024,1068,1168`, green: '38:451,517,582,646,712,778,844,910' }
];

function dots(src, t) {
    return src.split(/\s+/).filter(Boolean).map(row => {
        const [y, xs] = row.split(':');
        return xs.split(',').map(x => `M${+x + t.dx} ${+y + t.dy}h0`).join('');
    }).join('');
}

function drawDetail() {
    const svg = document.getElementById('detail');
    const base = { fill: 'none', 'stroke-linecap': 'round' };
    for (const t of tiles) {
        addPath(svg, { ...base, d: dots(t.red, t), stroke: '#f00', 'stroke-width': 17 });
        addPath(svg, { ...base, d: dots(t.green, t), stroke: '#439a00', 'stroke-width': 27 });
        addPath(svg, { ...base, d: dots(t.green, t), stroke: '#b89a10', 'stroke-width': 17 });
    }
}

drawBoard();
drawDetail();
```
